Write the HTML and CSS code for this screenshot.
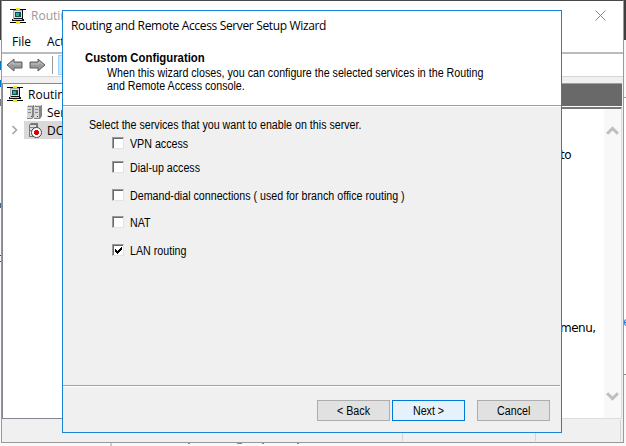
FILE: index.html
```
<!DOCTYPE html>
<html lang="en"><head><meta charset="utf-8"><title>Routing and Remote Access</title><link rel="stylesheet" href="styles.css"></head>
<body>
<svg width="0" height="0" class="defs" shape-rendering="crispEdges">
<symbol id="net" viewBox="0 0 16 16"><path d="M0 1h16v1H0zM0 14h16v1H0z" fill="#000"/><path d="M6 0h4v2H6zM6 13h4v3H6z" fill="#f4e900"/><path d="M3 2h10v9h1v2H2v-2h1z" fill="#111"/><path d="M3 2h9v1H4v8H3z" fill="#aaa"/><path d="M4 3h8v7H4z" fill="#ddd"/><path d="M5 4h6v5H5z" fill="#164b4c"/><path d="M6 5h3v3H6z" fill="#20b4ac"/><path d="M3 11h9v1H3z" fill="#ccc"/></symbol>
<symbol id="server" viewBox="0 0 16 16"><path d="M1 3l2-2h5v12l-2 2H1zM8 3l2-2h6v11l-2 3H8z" fill="#858585"/><path d="M1 3h5v11H1zM8 3h5v11H8z" fill="#d7d7d7"/><path d="M2 5h3v1H2zM2 8h3v1H2zM9 5h3v1H9zM9 8h3v1H9z" fill="#888"/><path d="M3 1h4v1H3zM10 1h5v1h-5z" fill="#ddd"/><path d="M5 12h1v1H5zM11 12h1v1h-1z" fill="#e00"/></symbol>
<symbol id="stopped" viewBox="0 0 16 16"><path d="M1 3l2-2h7v12l-2 2H1z" fill="#777"/><path d="M2 3h6v11H2z" fill="#ddd"/><path d="M2 5h6v1H2zM2 8h4v1H2z" fill="#888"/><circle cx="8.5" cy="10.5" r="5" fill="#fff" stroke="#444" shape-rendering="auto"/><path d="M7 8h3v1h1v3h-1v1H7v-1H6V9h1z" fill="#e00000"/></symbol>
</svg>
<div class="desktop">
<div class="behind-left"><i class="ink a"></i><i class="ink b"></i><i class="ink c"></i><i class="ink d"></i><i class="ink e"></i></div>
<div class="behind-right"><span>e</span></div>
<div class="behind-bottom"><i class="v1"></i><i class="v2"></i><i class="v3"></i><i class="v4"></i><i class="v5"></i></div>
<section class="console">
<header class="console-title"><svg class="ico"><use href="#net"/></svg><span>Routing</span><svg class="close" viewBox="0 0 11 11"><path d="M.5.5l10 10M10.500.5l-10 10" fill="none" stroke="#888" stroke-width="1"/></svg></header>
<nav class="menu"><span>File</span><span>Action</span></nav>
<div class="tools"><svg class="arrow" viewBox="0 0 17 14"><path d="M1 7l7-6v3h8v6H8v3z" fill="#999" stroke="#606060"/><path d="M3 7l4-3v2h8" fill="none" stroke="#c4c4c4"/></svg><svg class="arrow" viewBox="0 0 17 14"><path d="M16 7L9 1v3H1v6h8v3z" fill="#999" stroke="#606060"/><path d="M2 6h8V4l4 3" fill="none" stroke="#c4c4c4"/></svg><i class="tool-line"></i><i class="tool-hot"></i></div>
<div class="panes"><div class="tree">
<div class="node root"><svg class="ico"><use href="#net"/></svg><span>Routing</span></div>
<div class="node child"><svg class="ico"><use href="#server"/></svg><span>Server</span></div>
<div class="node server"><svg class="chev" viewBox="0 0 6 10"><path d="M1 1l4 4-4 4" fill="none" stroke="#a5a5a5" stroke-width="1.6"/></svg><div class="picked"><svg class="ico"><use href="#stopped"/></svg><span>DC</span></div></div>
</div><div class="details"><div class="details-head"></div><div class="details-body"><div class="copy"><p class="p1">to</p><p class="p2">menu,</p></div><div class="scroll"><svg viewBox="0 0 12 10"><path d="M1 8l5-5 5 5" fill="none" stroke="#bfbfbf" stroke-width="2.8"/></svg><svg viewBox="0 0 12 10"><path d="M1 2l5 5 5-5" fill="none" stroke="#bfbfbf" stroke-width="2.8"/></svg></div></div></div></div>
<footer class="status"><i></i><i></i><i></i></footer>
</section>
<section class="wizard">
<header><div class="wizard-title"><span>Routing and Remote Access Server Setup Wizard</span></div><h1><span class="t">Custom Configuration</span></h1><p><span class="t">When this wizard closes, you can configure the selected services in the Routing</span></p><p><span class="t">and Remote Access console.</span></p></header>
<main><div class="prompt"><span class="t">Select the services that you want to enable on this server.</span></div>
<label class="opt o1"><i></i><span class="t">VPN access</span></label>
<label class="opt o2"><i></i><span class="t">Dial-up access</span></label>
<label class="opt o3"><i></i><span class="t">Demand-dial connections ( used for branch office routing )</span></label>
<label class="opt o4"><i></i><span class="t">NAT</span></label>
<label class="opt o5"><i><svg viewBox="0 0 7 7" shape-rendering="crispEdges"><path d="M0 2h1v1h1v1h1V3h1V2h1V1h1V0h1v3H6v1H5v1H4v1H3v1H2V6H1V5H0z"/></svg></i><span class="t">LAN routing</span></label></main>
<footer class="buttons"><button><span class="t">&lt; Back</span></button><button class="next"><span class="t">Next &gt;</span></button><button class="cancel"><span class="t">Cancel</span></button></footer>
</section>
</div></body></html>
```
FILE: styles.css
```
*{box-sizing:border-box}
body{margin:0;overflow:hidden;font-family:"Liberation Sans",sans-serif;font-size:12px;color:#000}
.defs{position:absolute}
.desktop{position:relative;width:626px;height:446px;background:#f9f9f9;overflow:hidden}
.behind-left{position:absolute;left:0;top:0;width:2px;height:446px;background:linear-gradient(#3f3f3f 40px,#f9f9f9 40px)}
.ink{position:absolute;left:0;width:2px;height:5px;background:#0078c8}
.ink.a{top:61px;height:9px}.ink.b{top:80px;height:7px}.ink.c{top:99px;height:7px;background:#777}.ink.d{top:203px;background:#456486}.ink.e{top:255px;height:7px;border:solid #444;border-width:1px 0;background:none}
.behind-right{position:absolute;right:0;top:0;width:3px;height:446px;background:linear-gradient(#3f3f3f 40px,#f8f8f8 40px 97px,#999 97px 98px,#fff 98px 374px,#888 374px 375px,#f8f8f8 375px);overflow:hidden}
.behind-right span{display:block;margin-top:312px;color:#0078d7;font:13px "Open Sans",sans-serif}
.behind-bottom{position:absolute;left:0;right:0;bottom:0;height:3px}
.behind-bottom i{position:absolute;top:0;width:2px;height:1px;background:#888}
.behind-bottom .v1{left:110px;height:3px;background:#ccc}.behind-bottom .v2{left:188px}.behind-bottom .v3{left:237px;width:5px}.behind-bottom .v4{left:262px}.behind-bottom .v5{left:297px}
.console{position:absolute;left:1px;top:0;width:623px;height:443px;border:1px solid #999;border-top-color:#484848;background:#fff;display:flex;flex-direction:column;font-family:"Open Sans",sans-serif}
.console span{white-space:nowrap}
.ico{width:16px;height:16px;flex:none}
.console-title{height:29px;display:flex;align-items:center;padding:0 17px 0 8px;color:#999;gap:5px}
.close{width:11px;height:11px;margin-left:auto}
.menu{height:24px;border-bottom:2px solid #b9bbc1;display:flex;gap:16px;padding:1px 10px;line-height:22px}
.tools{height:23px;display:flex;align-items:center;padding:0 4px;gap:6px;border-bottom:1px solid #d5d5d5}
.arrow{width:17px;height:16px}
.tool-line{width:1px;height:18px;background:#999}
.tool-hot{width:30px;height:20px;border:1px solid #99d1ff;background:#cce8ff;margin-left:-1px}
.panes{height:342px;padding-top:6px;background:#f0f0f0;display:flex;gap:2px}
.tree{width:240px;border:1px solid #828790;background:#fff;padding-top:1px}
.node{height:18px;display:flex;align-items:center}
.root{padding-left:4px;gap:5px}.child{padding-left:23px;gap:5px}.server{padding-left:8px;gap:6px}
.chev{width:7px;height:10px;flex:none}.picked{height:18px;background:#d9d9d9;width:170px;display:flex;align-items:center;gap:3px;padding-left:4px}
.details{flex:1;display:flex;flex-direction:column;margin-right:1px;background:#fff;border-top:1px solid #a0a0a0}
.details-head{height:22px;background:#696969}
.details-body{flex:1;display:flex;margin-top:1px;border:1px solid #999;border-top:2px solid #777;border-right-color:#ddd;border-bottom-color:#ddd}
.copy{flex:1;font:12px "DejaVu Sans",sans-serif;letter-spacing:-.5px;padding-left:315px;white-space:nowrap}.copy p{margin:0;line-height:16px}.p1{padding-top:38px}.p2{padding-top:157px}
.scroll{width:17px;background:#f8f8f8;display:flex;flex-direction:column;justify-content:space-between;align-items:center;padding:16px 0}.scroll svg{width:13px;height:11px}
.status{flex:1;background:#f0f0f0;display:flex;justify-content:flex-end;padding:1px 2px}.status i{width:1px;border-right:1px solid #d4d4d4}.status i:nth-child(2){margin-left:132px}.status i:nth-child(3){margin-left:84px}
.wizard{position:absolute;left:62px;top:10px;width:500px;height:423px;border:1px solid #1883d7;background:#f0f0f0;display:flex;flex-direction:column}
.wizard span{white-space:nowrap}
.t{display:inline-block;transform:scaleX(.89);transform-origin:left}
.wizard header{height:96px;background:#fff;border-bottom:1px solid #fff;box-shadow:inset 0 -1px #a0a0a0}
.wizard-title{height:30px;padding:0 8px;line-height:30px;font-family:"Open Sans",sans-serif;letter-spacing:-.35px}
h1{margin:9px 0 1px 22px;font-size:12px;line-height:16px}
h1 .t{transform:scaleX(.945)}
.wizard header p{margin:0 0 0 44px;line-height:13px;height:13px}
.wizard main{height:278px;padding-top:11px}
.prompt{height:14px;line-height:14px;padding-left:26px}
.opt{display:flex;align-items:flex-start;height:13px;padding-left:49px;gap:6px;line-height:15px}
.opt i{width:12px;height:12px;flex:none;background:#fff;border:1px solid;border-color:#999 #e3e3e3 #e3e3e3 #999;box-shadow:inset 1px 1px #696969;padding:2px}
.opt svg{display:block;width:7px;height:7px}
.o1{margin-top:5px}.o2{margin-top:11px}.o3{margin-top:15px}.o4{margin-top:14px}.o5{margin-top:15px}
.buttons{flex:1;border-top:1px solid #a0a0a0;box-shadow:inset 0 1px #fff;margin-right:1px;padding:14px 10px 0;display:flex;justify-content:flex-end;gap:2px}
button{width:73px;height:21px;padding:0;border:1px solid #adadad;background:#e1e1e1;font:12px "Liberation Sans",sans-serif;color:#000}
button .t{transform-origin:center}
.next{border-color:#0078d7;background:#e5f1fb}.cancel{margin-left:10px}
```
